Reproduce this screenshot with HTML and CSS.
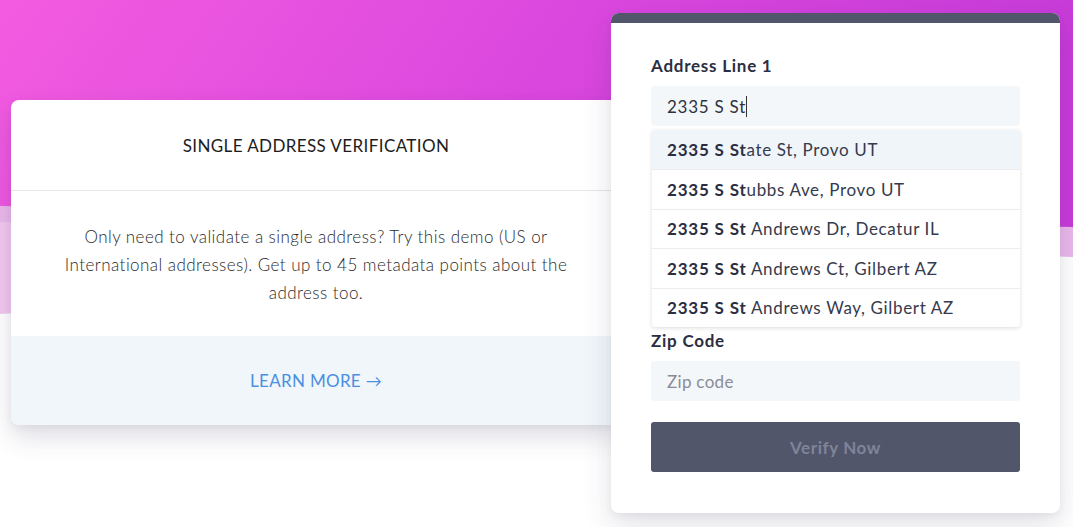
FILE: index.html
```html
<!DOCTYPE html>
<html lang="en">
<head>
<meta charset="utf-8">
<title>Single Address Verification</title>
<link rel="stylesheet" href="styles.css">
</head>
<body>
<div class="backdrop">
  <svg viewBox="0 0 1073 527" preserveAspectRatio="none" width="1073" height="527">
    <defs>
      <linearGradient id="mag" x1="0" y1="0" x2="1" y2="0.15">
        <stop offset="0" stop-color="#f35ce0"/>
        <stop offset="0.55" stop-color="#da47de"/>
        <stop offset="1" stop-color="#c73bd8"/>
      </linearGradient>
    </defs>
    <polygon points="0,205 1073,255 1073,255 0,314" fill="#f2c8ee"/>
    <polygon points="0,205 1073,226 1073,257 0,222" fill="#eab8ea"/>
    <polygon points="0,0 1073,0 1073,227 0,206" fill="url(#mag)"/>
  </svg>
</div>

<main class="stage">
  <section class="info-card">
    <header class="info-head">SINGLE ADDRESS VERIFICATION</header>
    <p class="info-body">Only need to validate a single address? Try this demo (US or International addresses). Get up to 45 metadata points about the address too.</p>
    <footer class="info-foot"><a class="learn" href="#">LEARN MORE <span class="arrow">&rarr;</span></a></footer>
  </section>

  <section class="form-card">
    <div class="form-bar"></div>
    <form class="form">
      <div class="field field-address">
        <label class="label">Address Line 1</label>
        <div class="input"><span class="typed">2335 S St</span><span class="caret"></span></div>
        <ul class="suggest">
          <li class="opt active"><b>2335 S St</b>ate St, Provo UT</li>
          <li class="opt"><b>2335 S St</b>ubbs Ave, Provo UT</li>
          <li class="opt"><b>2335 S St</b> Andrews Dr, Decatur IL</li>
          <li class="opt"><b>2335 S St</b> Andrews Ct, Gilbert AZ</li>
          <li class="opt"><b>2335 S St</b> Andrews Way, Gilbert AZ</li>
        </ul>
      </div>
      <div class="covered"></div>
      <div class="field">
        <label class="label">Zip Code</label>
        <div class="input placeholder">Zip code</div>
      </div>
      <div class="button">Verify Now</div>
    </form>
  </section>
</main>
</body>
</html>
```

FILE: styles.css
```css
* { box-sizing: border-box; }

html, body {
  margin: 0;
  padding: 0;
  width: 1073px;
  height: 527px;
  overflow: hidden;
  background: #ffffff;
  font-family: "Lato", "Liberation Sans", sans-serif;
}

body { position: relative; }

.backdrop {
  position: absolute;
  left: 0;
  top: 0;
  width: 1073px;
  height: 527px;
  z-index: 0;
}
.backdrop svg { display: block; }

.stage {
  position: relative;
  z-index: 1;
  display: flex;
  align-items: flex-start;
  padding: 13px 0 0 11px;
}

/* Left info card */
.info-card {
  width: 610px;
  margin-top: 87px;
  background: #fff;
  border-radius: 8px;
  overflow: hidden;
  box-shadow: 0 12px 26px rgba(50, 50, 93, 0.16), 0 3px 8px rgba(0, 0, 0, 0.05);
  display: flex;
  flex-direction: column;
}

.info-head {
  height: 91px;
  display: flex;
  align-items: center;
  justify-content: center;
  font-size: 17px;
  color: #1c1c1c;
  letter-spacing: 0.4px;
  border-bottom: 1px solid #e6e6e6;
}

.info-body {
  margin: 0;
  padding: 32px 40px 29px;
  text-align: center;
  font-size: 17px;
  line-height: 28px;
  font-weight: 300;
  letter-spacing: 0.45px;
  color: #2a2a2a;
}

.info-foot {
  height: 89px;
  background: #f1f6fb;
  display: flex;
  align-items: center;
  justify-content: center;
}

.learn {
  color: #4a8fe2;
  text-decoration: none;
  font-size: 17px;
  letter-spacing: 0.3px;
}
.arrow { font-size: 16px; }

/* Right form card */
.form-card {
  width: 449px;
  height: 500px;
  margin-left: -10px;
  position: relative;
  z-index: 2;
  background: #fff;
  border-radius: 8px;
  overflow: hidden;
  box-shadow: 0 12px 30px rgba(50, 50, 93, 0.14), 0 3px 8px rgba(0, 0, 0, 0.05);
}

.form-bar {
  height: 10px;
  background: #52566b;
}

.form {
  padding: 32px 40px 0 40px;
  display: flex;
  flex-direction: column;
  gap: 21px;
  margin: 0;
}

.field {
  display: flex;
  flex-direction: column;
  gap: 10px;
}

.field-address {
  position: relative;
  z-index: 3;
}

.covered { height: 162px; }

.label {
  font-size: 17px;
  line-height: 21px;
  font-weight: 700;
  letter-spacing: 0.75px;
  color: #2b2e42;
}

.input {
  height: 40px;
  background: #f4f7f9;
  border-radius: 3px;
  padding: 0 16px;
  display: flex;
  align-items: center;
  font-size: 17px;
  letter-spacing: 0.75px;
  color: #2f3140;
}

.placeholder { color: #8a8c98; letter-spacing: 0.3px; }

.caret {
  width: 1px;
  height: 21px;
  background: #333;
  margin-left: 0;
}

.suggest {
  position: absolute;
  left: 1px;
  right: 0;
  top: 75px;
  margin: 0;
  padding: 0;
  list-style: none;
  background: #fff;
  border-radius: 3px;
  box-shadow: 0 1px 4px rgba(0, 0, 0, 0.14);
  overflow: hidden;
}

.opt {
  height: 39.4px;
  display: flex;
  align-items: center;
  padding: 0 15px;
  font-size: 17px;
  letter-spacing: 0.65px;
  color: #363a4d;
  border-top: 1px solid #ececf0;
  white-space: pre;
}
.opt:first-child { border-top: none; }
.opt.active { background: #f0f5fa; }
.opt b { color: #2b2e42; font-weight: 700; letter-spacing: 0.8px; }

.button {
  height: 50px;
  background: #52566b;
  border-radius: 3px;
  display: flex;
  align-items: center;
  justify-content: center;
  font-size: 17px;
  font-weight: 700;
  letter-spacing: 0.6px;
  color: #7f849a;
}
```
